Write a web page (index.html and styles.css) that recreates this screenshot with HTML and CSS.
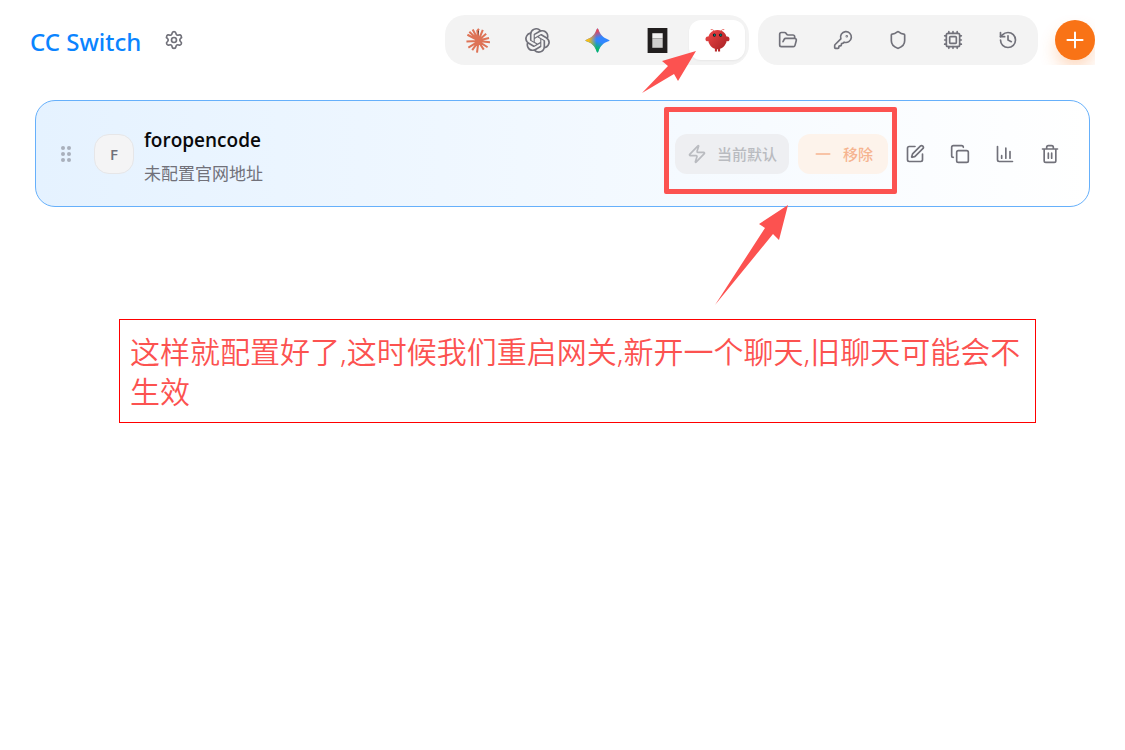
FILE: index.html
```html
<!DOCTYPE html>
<html lang="zh-CN">
<head>
    <meta charset="UTF-8">
    <meta name="viewport" content="width=device-width, initial-scale=1.0">
    <title>CC Switch</title>
    <link rel="stylesheet" href="styles.css">
</head>
<body>
    <header class="header">
        <div class="brand">
            <a class="brand-name" href="#">CC Switch</a>
            <button class="settings" aria-label="设置">
                <svg class="icon" viewBox="0 0 24 24"><path d="M9.671 4.136a2.34 2.34 0 0 1 4.659 0 2.34 2.34 0 0 0 3.319 1.915 2.34 2.34 0 0 1 2.33 4.033 2.34 2.34 0 0 0 0 3.831 2.34 2.34 0 0 1-2.33 4.033 2.34 2.34 0 0 0-3.319 1.915 2.34 2.34 0 0 1-4.659 0 2.34 2.34 0 0 0-3.32-1.915 2.34 2.34 0 0 1-2.33-4.033 2.34 2.34 0 0 0 0-3.831A2.34 2.34 0 0 1 6.35 6.051a2.34 2.34 0 0 0 3.319-1.915"/><circle cx="12" cy="12" r="3"/></svg>
            </button>
        </div>

        <div class="toolbar">
            <nav class="apps">
                <button class="app" aria-label="Claude">
                    <svg class="logo" viewBox="0 0 26 26" stroke="#de7356" stroke-width="2.1">
                        <path d="M14 13.500L12.800 3L14.500 .8M14 13L18.500 2M14 13L22 6M14 13L25 10.500M14 13.500L26 14.800M14 14L23.500 20M14 14L19.500 22.500M14 14L12.500 25.500M14 14L7.500 23M14 14L3.500 20.500M14 13.500L1.500 14M14 13L2.500 7M14 13L4.500 4M14 13L8 1.500"/>
                        <circle cx="14" cy="13.500" r="2.500" fill="#de7356"/>
                    </svg>
                </button>
                <button class="app" aria-label="Codex">
                    <svg class="logo openai" viewBox="0 0 24 24"><path d="M22.2819 9.8211a5.9847 5.9847 0 0 0-.5157-4.9108 6.0462 6.0462 0 0 0-6.5098-2.9A6.0651 6.0651 0 0 0 4.9807 4.1818a5.9847 5.9847 0 0 0-3.9977 2.9 6.0462 6.0462 0 0 0 .7427 7.0966 5.98 5.98 0 0 0 .511 4.9107 6.051 6.051 0 0 0 6.5146 2.9001A5.9847 5.9847 0 0 0 13.2599 24a6.0557 6.0557 0 0 0 5.7718-4.2058 5.9894 5.9894 0 0 0 3.9977-2.9001 6.0557 6.0557 0 0 0-.7475-7.0729zm-9.022 12.6081a4.4755 4.4755 0 0 1-2.8764-1.0408l.1419-.0804 4.7783-2.7582a.7948.7948 0 0 0 .3927-.6813v-6.7369l2.02 1.1686a.071.071 0 0 1 .038.052v5.5826a4.504 4.504 0 0 1-4.4945 4.4944zm-9.6607-4.1254a4.4708 4.4708 0 0 1-.5346-3.0137l.142.0852 4.783 2.7582a.7712.7712 0 0 0 .7806 0l5.8428-3.3685v2.3324a.0804.0804 0 0 1-.0332.0615L9.74 19.9502a4.4992 4.4992 0 0 1-6.1408-1.6464zM2.3408 7.8956a4.485 4.485 0 0 1 2.3655-1.9728V11.6a.7664.7664 0 0 0 .3879.6765l5.8144 3.3543-2.0201 1.1685a.0757.0757 0 0 1-.071 0l-4.8303-2.7865A4.504 4.504 0 0 1 2.3408 7.872zm16.5963 3.8558L13.1038 8.364 15.1192 7.2a.0757.0757 0 0 1 .071 0l4.8303 2.7913a4.4944 4.4944 0 0 1-.6765 8.1042v-5.6772a.79.79 0 0 0-.407-.667zm2.0107-3.0231l-.142-.0852-4.7735-2.7818a.7759.7759 0 0 0-.7854 0L9.409 9.2297V6.8974a.0662.0662 0 0 1 .0284-.0615l4.8303-2.7866a4.4992 4.4992 0 0 1 6.6802 4.66zM8.3065 12.863l-2.02-1.1638a.0804.0804 0 0 1-.038-.0567V6.0742a4.4992 4.4992 0 0 1 7.3757-3.4537l-.142.0805L8.704 5.459a.7948.7948 0 0 0-.3927.6813zm1.0976-2.3654l2.602-1.4998 2.6069 1.4998v2.9994l-2.5974 1.4997-2.6067-1.4997Z"/></svg>
                </button>
                <button class="app" aria-label="Gemini">
                    <svg class="logo" viewBox="0 0 24 24">
                        <defs>
                            <linearGradient id="gem-top" x1="9" y1="0" x2="12" y2="10" gradientUnits="userSpaceOnUse"><stop offset=".3" stop-color="#f0434f"/><stop offset="1" stop-color="#f0434f" stop-opacity="0"/></linearGradient>
                            <linearGradient id="gem-left" x1="0" y1="12" x2="11" y2="12" gradientUnits="userSpaceOnUse"><stop offset=".3" stop-color="#fabc12"/><stop offset="1" stop-color="#fabc12" stop-opacity="0"/></linearGradient>
                            <linearGradient id="gem-bottom" x1="10" y1="24" x2="13" y2="13" gradientUnits="userSpaceOnUse"><stop offset=".35" stop-color="#08b962"/><stop offset="1" stop-color="#08b962" stop-opacity="0"/></linearGradient>
                            <path id="gem" d="M12 .5Q12.500.5 12.800 1.500C14.500 6.500 17.500 9.500 22.500 11.200Q23.500 11.500 23.500 12T22.500 12.800C17.500 14.500 14.500 17.500 12.800 22.500Q12.500 23.500 12 23.500T11.200 22.500C9.500 17.500 6.500 14.500 1.500 12.800Q.5 12.500.5 12T1.500 11.200C6.500 9.500 9.500 6.500 11.200 1.500Q11.500.5 12 .5Z"/>
                        </defs>
                        <use href="#gem" fill="#3186ff"/>
                        <use href="#gem" fill="url(#gem-bottom)"/>
                        <use href="#gem" fill="url(#gem-top)"/>
                        <use href="#gem" fill="url(#gem-left)"/>
                    </svg>
                </button>
                <button class="app" aria-label="OpenCode">
                    <svg class="logo" viewBox="0 0 24 24"><path fill="#211e1e" d="M2.500 0h19v24h-19z"/><path fill="#f1f0f0" d="M7 5h10v5H7z"/><path fill="#cfcecd" d="M7 10h10v9H7z"/></svg>
                </button>
                <button class="app active" aria-label="OpenClaw">
                    <svg class="logo" viewBox="0 0 24 24">
                        <defs><linearGradient id="claw" x1="0" y1="0" x2="1" y2="1"><stop offset="0" stop-color="#ee4747"/><stop offset="1" stop-color="#a31f22"/></linearGradient></defs>
                        <path fill="none" stroke="#ea6b66" stroke-width=".9" d="M9 3Q7.500 1 5.500 1.500M15 3Q16.500 1 18.500 1.500"/>
                        <path fill="#dc4040" d="M4 8.500C1.500 7.500.2 9.500.5 11.200 1 13.200 3 13 4.500 12Z"/>
                        <path fill="#bd2c2f" d="M20 8.500c2.500-1 3.800 1 3.500 2.700-.5 2-2.500 1.800-4 .8Z"/>
                        <path fill="url(#claw)" d="M12 2c5.500 0 9 4 9 8.800 0 4.200-3 8-6.500 9.200v2.500h-2v-2h-1v2h-2V20C6 18.800 3 15 3 10.800 3 6 6.500 2 12 2Z"/>
                        <circle cx="9" cy="6.800" r="1.500" fill="#07151b"/><circle cx="15" cy="6.800" r="1.500" fill="#07151b"/>
                        <circle cx="9.200" cy="6.700" r=".8" fill="#00a99d"/><circle cx="15.200" cy="6.700" r=".8" fill="#00a99d"/>
                    </svg>
                </button>
            </nav>

            <nav class="tools">
                <button class="tool" aria-label="工作区">
                    <svg class="icon" viewBox="0 0 24 24"><path d="m6 14 1.500-2.900A2 2 0 0 1 9.240 10H20a2 2 0 0 1 1.940 2.500l-1.540 6a2 2 0 0 1-1.950 1.500H4a2 2 0 0 1-2-2V5a2 2 0 0 1 2-2h3.900a2 2 0 0 1 1.690.9l.81 1.200a2 2 0 0 0 1.670.9H18a2 2 0 0 1 2 2v2"/></svg>
                </button>
                <button class="tool" aria-label="密钥">
                    <svg class="icon" viewBox="0 0 24 24"><path d="M2.586 17.414A2 2 0 0 0 2 18.828V21a1 1 0 0 0 1 1h3a1 1 0 0 0 1-1v-1a1 1 0 0 1 1-1h1a1 1 0 0 0 1-1v-1a1 1 0 0 1 1-1h.172a2 2 0 0 0 1.414-.586l.814-.814a6.500 6.500 0 1 0-4-4z"/><circle cx="16.500" cy="7.500" r=".5"/></svg>
                </button>
                <button class="tool" aria-label="安全">
                    <svg class="icon" viewBox="0 0 24 24"><path d="M20 13c0 5-3.500 7.500-7.660 8.950a1 1 0 0 1-.67-.01C7.500 20.500 4 18 4 13V6a1 1 0 0 1 1-1c2 0 4.500-1.200 6.240-2.720a1.170 1.170 0 0 1 1.520 0C14.510 3.810 17 5 19 5a1 1 0 0 1 1 1z"/></svg>
                </button>
                <button class="tool" aria-label="代理">
                    <svg class="icon" viewBox="0 0 24 24"><rect x="4" y="4" width="16" height="16" rx="2"/><rect x="8" y="8" width="8" height="8" rx="1"/><path d="M12 20v2M12 2v2M17 20v2M17 2v2M2 12h2M2 17h2M2 7h2M20 12h2M20 17h2M20 7h2M7 20v2M7 2v2"/></svg>
                </button>
                <button class="tool" aria-label="会话历史">
                    <svg class="icon" viewBox="0 0 24 24"><path d="M3 12a9 9 0 1 0 9-9 9.750 9.750 0 0 0-6.740 2.740L3 8"/><path d="M3 3v5h5M12 7v5l4 2"/></svg>
                </button>
            </nav>

            <button class="add" aria-label="添加">
                <svg class="icon add-icon" viewBox="0 0 24 24"><path d="M5 12h14M12 5v14"/></svg>
            </button>
        </div>

        <svg class="arrow arrow-app" viewBox="0 0 56 44"><path d="M54 1 20 11 26 16 0 43 32 24 36 31Z"/></svg>
    </header>

    <main>
        <section class="provider">
            <button class="grip" aria-label="拖动排序">
                <svg viewBox="0 0 10 16"><circle cx="2" cy="2" r="2"/><circle cx="8" cy="2" r="2"/><circle cx="2" cy="8" r="2"/><circle cx="8" cy="8" r="2"/><circle cx="2" cy="14" r="2"/><circle cx="8" cy="14" r="2"/></svg>
            </button>
            <div class="avatar">F</div>
            <div class="info">
                <h2 class="name">foropencode</h2>
                <p class="site">未配置官网地址</p>
            </div>
            <div class="main-actions">
                <button class="action default" disabled>
                    <svg class="icon" viewBox="0 0 24 24"><path d="M4 14a1 1 0 0 1-.78-1.630l9.900-10.200a.5.5 0 0 1 .86.46l-1.920 6.020A1 1 0 0 0 13 10h7a1 1 0 0 1 .78 1.630l-9.900 10.200a.5.5 0 0 1-.86-.46l1.920-6.020A1 1 0 0 0 11 14z"/></svg>
                    当前默认
                </button>
                <button class="action remove" disabled>
                    <svg class="icon" viewBox="0 0 24 24"><path d="M4 12h16"/></svg>
                    移除
                </button>
                <div class="highlight"></div>
                <svg class="arrow arrow-actions" viewBox="0 0 74 100"><path d="M73 0 44 19 50 23 0 100 58 29 64 35Z"/></svg>
            </div>
            <div class="icon-actions">
                <button class="icon-action" aria-label="编辑">
                    <svg class="icon" viewBox="0 0 24 24"><path d="M12 3H5a2 2 0 0 0-2 2v14a2 2 0 0 0 2 2h14a2 2 0 0 0 2-2v-7"/><path d="M18.375 2.625a1 1 0 0 1 3 3l-9.013 9.014a2 2 0 0 1-.853.505l-2.873.84a.5.5 0 0 1-.62-.62l.84-2.873a2 2 0 0 1 .506-.852z"/></svg>
                </button>
                <button class="icon-action" aria-label="复制">
                    <svg class="icon" viewBox="0 0 24 24"><rect x="8" y="8" width="14" height="14" rx="2"/><path d="M4 16c-1.100 0-2-.9-2-2V4c0-1.100.9-2 2-2h10c1.100 0 2 .9 2 2"/></svg>
                </button>
                <button class="icon-action" aria-label="用量">
                    <svg class="icon" viewBox="0 0 24 24"><path d="M3 3v16a2 2 0 0 0 2 2h16M18 17V9M13 17V5M8 17v-3"/></svg>
                </button>
                <button class="icon-action" aria-label="删除">
                    <svg class="icon" viewBox="0 0 24 24"><path d="M3 6h18M19 6v14a2 2 0 0 1-2 2H7a2 2 0 0 1-2-2V6M8 6V4a2 2 0 0 1 2-2h4a2 2 0 0 1 2 2v2M10 11v6M14 11v6"/></svg>
                </button>
            </div>
        </section>

        <p class="note">这样就配置好了,这时候我们重启网关,新开一个聊天,旧聊天可能会不生效</p>
    </main>
</body>
</html>
```

FILE: styles.css
```css
:root {
    --blue: #0a84ff;
    --orange: #f97316;
    --red: #fc5250;
    --muted: #71717a;
    --panel: #f3f3f3;
}

* {
    margin: 0;
    padding: 0;
    box-sizing: border-box;
}

body {
    background-color: #fff;
    color: #09090b;
    font-family: 'Open Sans', 'Noto Sans CJK SC', sans-serif;
}

button {
    display: flex;
    align-items: center;
    justify-content: center;
    border: none;
    background: none;
    font-family: inherit;
    color: var(--muted);
    cursor: pointer;
}

.icon {
    width: 20px;
    height: 20px;
    fill: none;
    stroke: currentColor;
    stroke-width: 2;
    stroke-linecap: round;
    stroke-linejoin: round;
}

.header {
    position: relative;
    display: flex;
    align-items: center;
    justify-content: space-between;
    height: 80px;
    padding: 0 30px;
}

.brand {
    display: flex;
    align-items: center;
    gap: 13px;
}

.brand-name {
    padding-top: 3px;
    font-family: 'Noto Sans', sans-serif;
    font-size: 24px;
    font-weight: 500;
    line-height: 32px;
    color: var(--blue);
    text-decoration: none;
}

.settings {
    width: 40px;
    height: 40px;
}

/* clips the glow of the add button */
.toolbar {
    display: flex;
    align-items: center;
    height: 50px;
    overflow: hidden;
}

.apps,
.tools {
    display: flex;
    padding: 5px;
    border-radius: 20px;
    background-color: var(--panel);
}

.apps {
    gap: 4px;
    padding: 5px 4px;
    margin-right: 9px;
}

.tools {
    gap: 5px;
    margin-right: 17px;
}

.app {
    width: 56px;
    height: 40px;
    border-radius: 12px;
}

.app.active {
    background-color: #fff;
    box-shadow: 0 1px 2px rgba(0, 0, 0, 0.05);
}

.logo {
    width: 25px;
    height: 25px;
}

.openai {
    fill: var(--muted);
}

.tool {
    width: 50px;
    height: 40px;
}

.add {
    width: 40px;
    height: 40px;
    border-radius: 50%;
    background-color: var(--orange);
    color: #fff;
    box-shadow: 0 10px 18px -2px rgba(249, 115, 22, 0.3);
}

.add-icon {
    width: 26px;
    height: 26px;
    stroke-width: 1.8;
}

.provider {
    display: flex;
    align-items: center;
    margin: 20px 35px 0;
    padding: 17px 19px;
    border: 1px solid #66b0fb;
    border-radius: 20px;
    background: linear-gradient(90deg, #e5f2ff, #fff);
}

.grip {
    width: 22px;
    height: 32px;
}

.grip svg {
    width: 10px;
    height: 16px;
    fill: #a9b0bc;
}

.avatar {
    width: 40px;
    height: 40px;
    margin: 0 10px 0 17px;
    border: 1px solid #e6e6e8;
    border-radius: 15px;
    background-color: #f4f4f5;
    color: var(--muted);
    font-size: 15px;
    font-weight: 600;
    line-height: 39px;
    text-align: center;
}

.info {
    flex: 1;
    padding-top: 6px;
}

.name {
    margin-bottom: 3px;
    font-size: 19px;
    font-weight: 600;
    line-height: 32px;
}

.site {
    color: var(--muted);
    font-size: 17px;
    line-height: 30px;
}

.main-actions {
    position: relative;
    display: flex;
    gap: 9px;
    margin-right: 7px;
}

.action {
    gap: 10px;
    height: 40px;
    padding: 0 12px;
    border-radius: 12px;
    font-size: 15px;
    font-weight: 500;
}

.default {
    background-color: #eeeff2;
    color: #b9bbc0;
}

.remove {
    padding: 0 15px;
    background-color: #fdf3eb;
    color: #f6b490;
}

.highlight {
    position: absolute;
    inset: -27px -9px -20px -11px;
    border: 5px solid var(--red);
    border-radius: 2px;
}

.icon-actions {
    display: flex;
    gap: 5px;
}

.icon-action {
    width: 40px;
    height: 40px;
}

.arrow {
    position: absolute;
    fill: var(--red);
}

.arrow-app {
    top: 50px;
    right: 427px;
    width: 56px;
    height: 44px;
}

.arrow-actions {
    top: 71px;
    right: 99px;
    width: 74px;
    height: 100px;
}

.note {
    margin: 112px 89px 0 119px;
    padding: 12px 10px 10px;
    border: 1px solid #f00;
    color: var(--red);
    font-family: 'Noto Sans', 'Noto Sans CJK SC', sans-serif;
    font-size: 30px;
    font-weight: 350;
    line-height: 40px;
}
```
